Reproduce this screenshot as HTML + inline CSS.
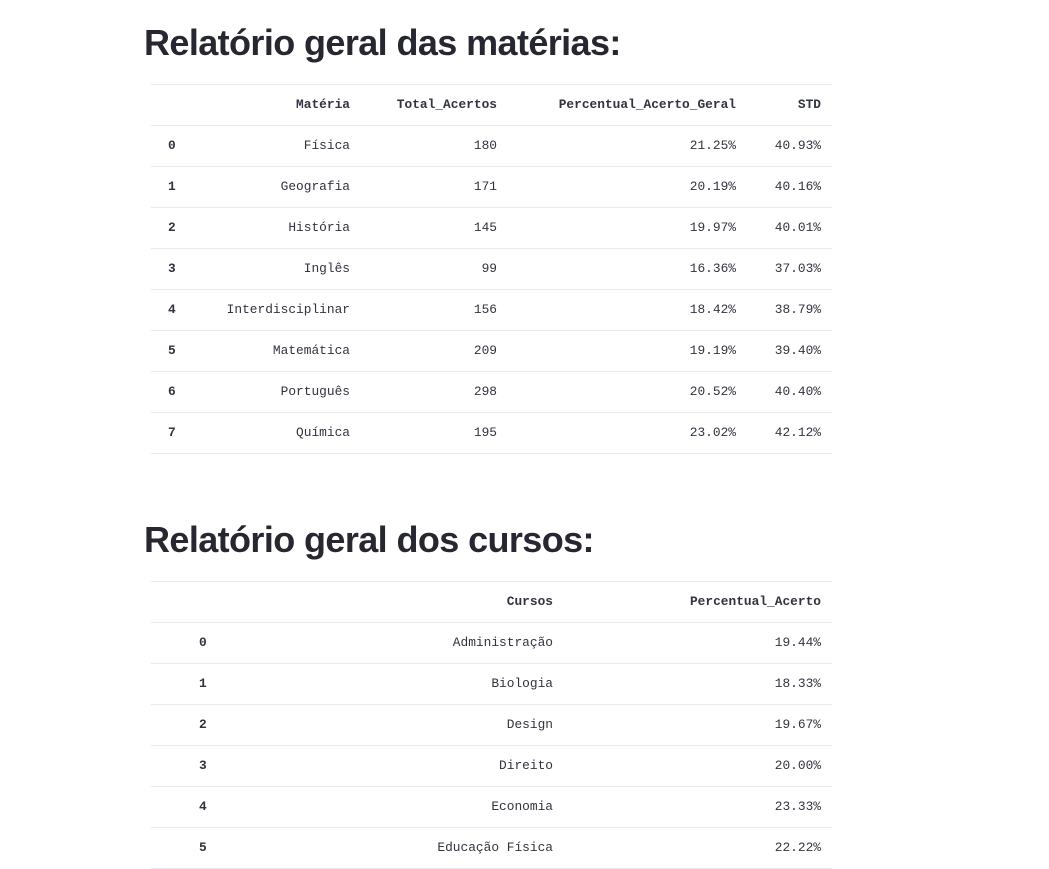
<!DOCTYPE html>
<html><head><meta charset="utf-8"><style>
body{margin:0;background:#fff;width:1049px;height:869px;overflow:hidden;position:relative;font-family:"Liberation Sans",sans-serif;color:#262730}
h1{position:absolute;left:144px;margin:0;font-size:36px;font-weight:bold;letter-spacing:-0.6px;line-height:44px;color:#262730}
.t{position:absolute;left:151px;width:681px;border-top:1px solid #e6e9ef;font-family:"Liberation Mono",monospace;font-size:12.85px;color:#31333f}
.r{position:relative;height:40px;border-bottom:1px solid #e6e9ef}
.r span{position:absolute;top:12px;line-height:16px;white-space:nowrap}
.h span{font-weight:bold}
.i{font-weight:bold}
</style></head><body>
<h1 style="top:21px">Relatório geral das matérias:</h1>
<div class="t" style="top:84px">
<div class="r h"><span style="right:482px">Matéria</span><span style="right:335px">Total_Acertos</span><span style="right:96px">Percentual_Acerto_Geral</span><span style="right:11px">STD</span></div>
<div class="r"><span class="i" style="left:17px">0</span><span style="right:482px">Física</span><span style="right:335px">180</span><span style="right:96px">21.25%</span><span style="right:11px">40.93%</span></div>
<div class="r"><span class="i" style="left:17px">1</span><span style="right:482px">Geografia</span><span style="right:335px">171</span><span style="right:96px">20.19%</span><span style="right:11px">40.16%</span></div>
<div class="r"><span class="i" style="left:17px">2</span><span style="right:482px">História</span><span style="right:335px">145</span><span style="right:96px">19.97%</span><span style="right:11px">40.01%</span></div>
<div class="r"><span class="i" style="left:17px">3</span><span style="right:482px">Inglês</span><span style="right:335px">99</span><span style="right:96px">16.36%</span><span style="right:11px">37.03%</span></div>
<div class="r"><span class="i" style="left:17px">4</span><span style="right:482px">Interdisciplinar</span><span style="right:335px">156</span><span style="right:96px">18.42%</span><span style="right:11px">38.79%</span></div>
<div class="r"><span class="i" style="left:17px">5</span><span style="right:482px">Matemática</span><span style="right:335px">209</span><span style="right:96px">19.19%</span><span style="right:11px">39.40%</span></div>
<div class="r"><span class="i" style="left:17px">6</span><span style="right:482px">Português</span><span style="right:335px">298</span><span style="right:96px">20.52%</span><span style="right:11px">40.40%</span></div>
<div class="r"><span class="i" style="left:17px">7</span><span style="right:482px">Química</span><span style="right:335px">195</span><span style="right:96px">23.02%</span><span style="right:11px">42.12%</span></div>
</div>
<h1 style="top:518px">Relatório geral dos cursos:</h1>
<div class="t" style="top:581px">
<div class="r h"><span style="right:279px">Cursos</span><span style="right:11px">Percentual_Acerto</span></div>
<div class="r"><span class="i" style="left:48px">0</span><span style="right:279px">Administração</span><span style="right:11px">19.44%</span></div>
<div class="r"><span class="i" style="left:48px">1</span><span style="right:279px">Biologia</span><span style="right:11px">18.33%</span></div>
<div class="r"><span class="i" style="left:48px">2</span><span style="right:279px">Design</span><span style="right:11px">19.67%</span></div>
<div class="r"><span class="i" style="left:48px">3</span><span style="right:279px">Direito</span><span style="right:11px">20.00%</span></div>
<div class="r"><span class="i" style="left:48px">4</span><span style="right:279px">Economia</span><span style="right:11px">23.33%</span></div>
<div class="r"><span class="i" style="left:48px">5</span><span style="right:279px">Educação Física</span><span style="right:11px">22.22%</span></div>
</div>
</body></html>
